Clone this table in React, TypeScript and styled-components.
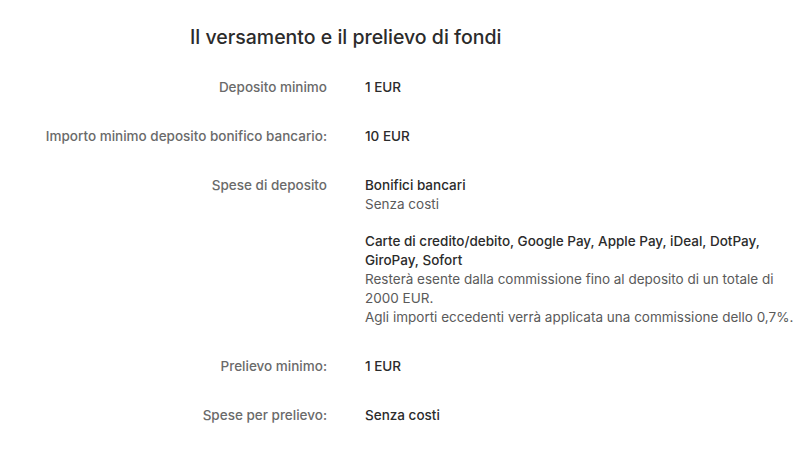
import styled, { createGlobalStyle } from 'styled-components';

const GlobalStyle = createGlobalStyle`
  body {
    margin: 0;
    background: #ffffff;
    font-family: Inter, "Liberation Sans", sans-serif;
    -webkit-font-smoothing: antialiased;
  }
`;

const Page = styled.div`
  width: 810px;
  height: 466px;
  padding-top: 24px;
  box-sizing: border-box;
  overflow: hidden;
`;

const Title = styled.h2`
  margin: 0 0 13px 190px;
  font-size: 19.5px;
  line-height: 26px;
  font-weight: 500;
  color: #2b2b2b;
`;

const Table = styled.dl`
  display: grid;
  grid-template-columns: 327px 1fr;
  column-gap: 38px;
  margin: 0;
  font-size: 13.5px;
  line-height: 19px;
`;

const Label = styled.dt`
  padding: 15px 0;
  text-align: right;
  color: #6a6a6a;
  font-weight: 500;
`;

const Value = styled.dd`
  margin: 0;
  padding: 15px 0;
  color: #2b2b2b;
  font-weight: 500;
`;

const Group = styled.div`
  & + & {
    margin-top: 18px;
  }
`;

const Line = styled.div<{ $muted?: boolean }>`
  font-weight: ${(p) => (p.$muted ? 400 : 500)};
  color: ${(p) => (p.$muted ? '#5a5a5a' : '#2b2b2b')};
  white-space: nowrap;
`;

const rows: { label: string; value: string }[] = [
  { label: 'Deposito minimo', value: '1 EUR' },
  { label: 'Importo minimo deposito bonifico bancario:', value: '10 EUR' },
];

export default function App() {
  return (
    <>
      <GlobalStyle />
      <Page>
        <Title>Il versamento e il prelievo di fondi</Title>
        <Table>
          {rows.map((r) => (
            <>
              <Label key={r.label}>{r.label}</Label>
              <Value>{r.value}</Value>
            </>
          ))}

          <Label>Spese di deposito</Label>
          <Value>
            <Group>
              <Line>Bonifici bancari</Line>
              <Line $muted>Senza costi</Line>
            </Group>
            <Group>
              <Line>Carte di credito/debito, Google Pay, Apple Pay, iDeal, DotPay,</Line>
              <Line>GiroPay, Sofort</Line>
              <Line $muted>Resterà esente dalla commissione fino al deposito di un totale di</Line>
              <Line $muted>2000 EUR.</Line>
              <Line $muted>Agli importi eccedenti verrà applicata una commissione dello 0,7%.</Line>
            </Group>
          </Value>

          <Label>Prelievo minimo:</Label>
          <Value>1 EUR</Value>

          <Label>Spese per prelievo:</Label>
          <Value>Senza costi</Value>
        </Table>
      </Page>
    </>
  );
}
